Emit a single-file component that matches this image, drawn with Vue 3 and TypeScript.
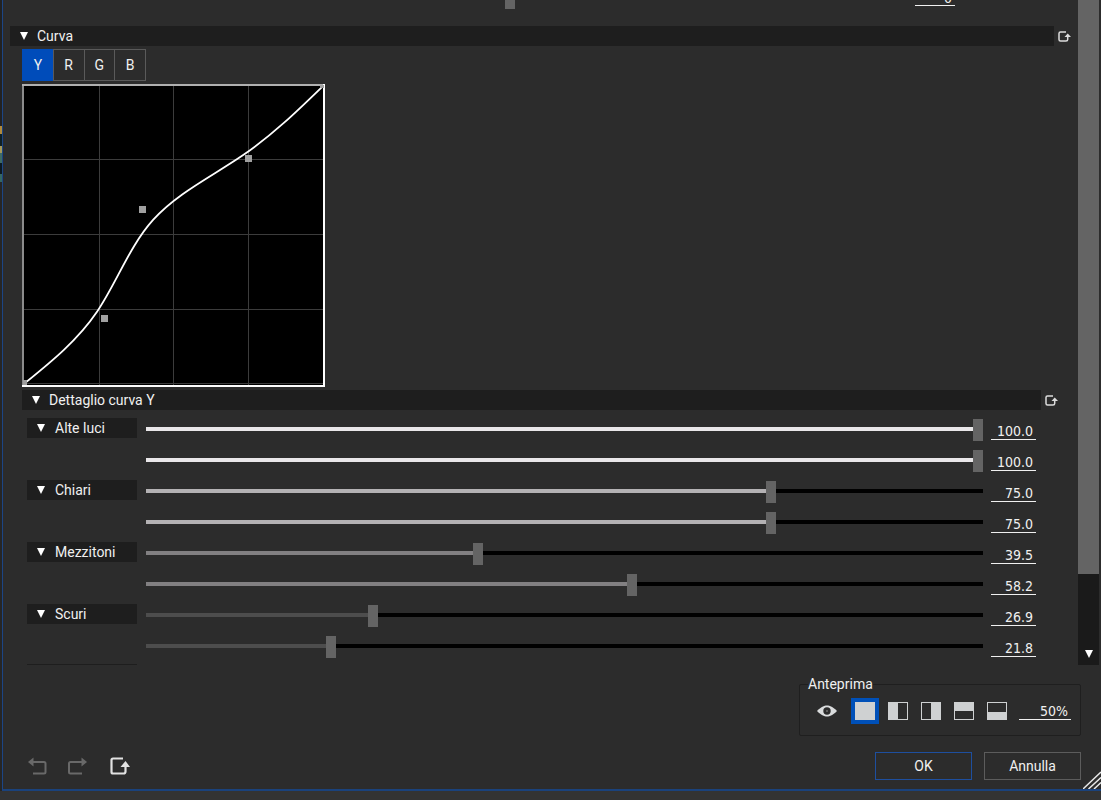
<script setup lang="ts">
import { computed, reactive, ref } from 'vue'

interface Point { x: number; y: number }
interface Band { name: string; color: string; values: number[] }
interface Split { id: string; label: string; x: number; y: number; w: number; h: number }

const channels = ['Y', 'R', 'G', 'B']
const channel = ref('Y')
const masterValue = ref(0)
const splitMode = ref('full')
const amount = ref('50%')

const bands = reactive<Band[]>([
  { name: 'Alte luci', color: '#e9e7e9', values: [100, 100] },
  { name: 'Chiari', color: '#b4b2b4', values: [75, 75] },
  { name: 'Mezzitoni', color: '#828082', values: [39.5, 58.2] },
  { name: 'Scuri', color: '#4d4d4d', values: [26.9, 21.8] },
])

const splits: Split[] = [
  { id: 'full', label: 'Intero', x: 0, y: 0, w: 20, h: 18 },
  { id: 'left', label: 'Sinistra', x: 0, y: 0, w: 10, h: 18 },
  { id: 'right', label: 'Destra', x: 10, y: 0, w: 10, h: 18 },
  { id: 'top', label: 'Alto', x: 0, y: 0, w: 20, h: 9 },
  { id: 'bottom', label: 'Basso', x: 0, y: 10, w: 20, h: 8 },
]

const gridX = [77, 151, 226]
const gridY = [75, 150, 225, 299]

const points: Point[] = [
  { x: 3, y: 299 },
  { x: 82, y: 235 },
  { x: 120, y: 126 },
  { x: 226, y: 75 },
  { x: 301, y: 2 },
]

const mix = (a: Point, b: Point, t: number): Point => ({
  x: a.x + (b.x - a.x) * t,
  y: a.y + (b.y - a.y) * t,
})
const fmt = (p: Point): string => `${p.x.toFixed(1)} ${p.y.toFixed(1)}`

// Uniform cubic B-spline through the control polygon, pinned at both ends.
const curvePath = computed(() => {
  const last = points.length - 1
  const knot = (i: number): Point =>
    i === 0 || i === last
      ? points[i]
      : mix(mix(points[i - 1], points[i], 2 / 3), mix(points[i], points[i + 1], 1 / 3), 0.5)
  let d = `M${fmt(knot(0))}`
  for (let i = 0; i < last; i++) {
    const a = mix(points[i], points[i + 1], 1 / 3)
    const b = mix(points[i], points[i + 1], 2 / 3)
    d += ` C${fmt(a)} ${fmt(b)} ${fmt(knot(i + 1))}`
  }
  return d
})

function setValue(band: Band, index: number, event: Event): void {
  const next = Number((event.target as HTMLInputElement).value)
  if (!Number.isNaN(next)) band.values[index] = next
}
</script>

<template>
  <div class="screen">
    <div class="backdrop"></div>
    <main class="dialog">
      <div class="body">
        <div class="viewport">
          <div class="content">
            <div class="master">
              <input v-model.number="masterValue" class="slider" type="range" min="-100" max="100" aria-label="Livello" />
              <input v-model="masterValue" class="number" type="text" aria-label="Valore livello" />
            </div>

            <div class="section">
              <button class="header" type="button">
                <svg class="tri" viewBox="0 0 8 8"><path d="M0 0H8L4 8Z" /></svg>Curva
              </button>
              <button class="reset" type="button" aria-label="Reimposta curva">
                <svg viewBox="0 0 13 11">
                  <path d="M8 1H2.500Q1 1 1 2.500V8.500Q1 10 2.500 10H8Q9.700 10 9.700 8.500V5" fill="none" stroke="#dcdcdc" stroke-width="1.500" />
                  <path d="M6.500 6L9.700 2.500L13 6Z" fill="#dcdcdc" />
                </svg>
              </button>
            </div>

            <div class="curve">
              <div class="tabs">
                <button v-for="c in channels" :key="c" type="button" class="tab" :class="{ active: c === channel }" @click="channel = c">{{ c }}</button>
              </div>
              <svg class="plot" viewBox="0 0 303 303">
                <rect width="303" height="303" fill="#000" />
                <g stroke="#3c3c3c" stroke-width="1" shape-rendering="crispEdges">
                  <path v-for="x in gridX" :key="'x' + x" :d="`M${x + 0.5} 0V303`" />
                  <path v-for="y in gridY" :key="'y' + y" :d="`M0 ${y + 0.5}H303`" />
                </g>
                <path d="M1 303V1" stroke="#8c8c8c" stroke-width="2" />
                <path d="M0 1H303" stroke="#b0b0b0" stroke-width="2" />
                <path d="M302 0V302H0" fill="none" stroke="#fff" stroke-width="2" />
                <path :d="curvePath" fill="none" stroke="#fff" stroke-width="1.800" />
                <rect v-for="p in points.slice(1, -1)" :key="p.x" :x="p.x - 3" :y="p.y - 4" width="7" height="7" fill="#a0a0a0" />
                <rect x="1" y="296" width="4" height="5" fill="#a0a0a0" />
                <rect x="298" y="1" width="4" height="3" fill="#a0a0a0" />
              </svg>
            </div>

            <div class="section nested">
              <button class="header" type="button">
                <svg class="tri" viewBox="0 0 8 8"><path d="M0 0H8L4 8Z" /></svg>Dettaglio curva Y
              </button>
              <button class="reset" type="button" aria-label="Reimposta dettaglio">
                <svg viewBox="0 0 13 11">
                  <path d="M8 1H2.500Q1 1 1 2.500V8.500Q1 10 2.500 10H8Q9.700 10 9.700 8.500V5" fill="none" stroke="#dcdcdc" stroke-width="1.500" />
                  <path d="M6.500 6L9.700 2.500L13 6Z" fill="#dcdcdc" />
                </svg>
              </button>
            </div>

            <div class="bands">
              <section v-for="band in bands" :key="band.name" class="band">
                <button class="header" type="button">
                  <svg class="tri" viewBox="0 0 8 8"><path d="M0 0H8L4 8Z" /></svg>{{ band.name }}
                </button>
                <div class="rows">
                  <div v-for="(v, i) in band.values" :key="i" class="row">
                    <input
                      class="slider" type="range" min="0" max="100" step="0.1" :value="v"
                      :aria-label="`${band.name} ${i + 1}`"
                      :style="{ '--fill': v + '%', '--tone': band.color }"
                      @input="setValue(band, i, $event)"
                    />
                    <input
                      class="number" type="text" :value="v.toFixed(1)"
                      :aria-label="`Valore ${band.name} ${i + 1}`"
                      @change="setValue(band, i, $event)"
                    />
                  </div>
                </div>
              </section>
              <div class="rule"></div>
            </div>
          </div>
        </div>
        <div class="scrollbar">
          <div class="thumb"></div>
          <button class="down" type="button" aria-label="Scorri in basso">
            <svg class="tri" viewBox="0 0 8 8"><path d="M0 0H8L4 8Z" /></svg>
          </button>
        </div>
      </div>

      <footer class="footer">
        <fieldset class="preview">
          <legend>Anteprima</legend>
          <button class="eye" type="button" aria-label="Mostra anteprima">
            <svg viewBox="0 0 20 12">
              <path d="M0 6C4 2 7 0.500 10 0.500S16 2 20 6C16 10 13 11.500 10 11.500S4 10 0 6Z" fill="#dadcdd" />
              <circle cx="10" cy="6" r="3.700" fill="#2c2c2c" /><circle cx="10" cy="6" r="1" fill="#6c6c6c" />
            </svg>
          </button>
          <button
            v-for="s in splits" :key="s.id" type="button" class="split"
            :class="{ active: s.id === splitMode }" :aria-label="s.label" @click="splitMode = s.id"
          >
            <svg viewBox="0 0 20 18">
              <rect x="0.500" y="0.500" width="19" height="17" fill="none" stroke="#cfd1d2" />
              <rect :x="s.x" :y="s.y" :width="s.w" :height="s.h" fill="#cfd1d2" />
            </svg>
          </button>
          <input v-model="amount" class="number amount" type="text" aria-label="Percentuale anteprima" />
        </fieldset>

        <div class="actions">
          <div class="history">
            <button type="button" aria-label="Annulla modifica">
              <svg viewBox="0 0 20 18">
                <path d="M5 5H16Q17.500 5 17.500 6.500V15Q17.500 16.500 16 16.500H5" fill="none" stroke="#696969" stroke-width="2" />
                <path d="M0 5L5.500 0.500V9.500Z" fill="#696969" />
              </svg>
            </button>
            <button type="button" aria-label="Ripeti modifica">
              <svg viewBox="0 0 20 18">
                <path d="M14 5H2.500Q1 5 1 6.500V15Q1 16.500 2.500 16.500H14" fill="none" stroke="#696969" stroke-width="2" />
                <path d="M19 5L13.500 0.500V9.500Z" fill="#696969" />
              </svg>
            </button>
            <button type="button" class="reset-all" aria-label="Reimposta tutto">
              <svg viewBox="0 0 20 18">
                <path d="M13 1.500H3Q1.500 1.500 1.500 3V15Q1.500 16.500 3 16.500H13.500Q15.500 16.500 15.500 14.500V8" fill="none" stroke="#e2e2e2" stroke-width="2.200" />
                <path d="M10.500 10L15.500 4L20 10Z" fill="#e2e2e2" />
              </svg>
            </button>
          </div>
          <div class="confirm">
            <button type="button" class="push primary">OK</button>
            <button type="button" class="push">Annulla</button>
          </div>
        </div>
        <svg class="grip" viewBox="0 0 18 18"><path d="M0 18L18 1M5.500 18L18 6.500M11 18L18 11.500" stroke="#e8e8e8" stroke-width="1.500" /></svg>
      </footer>
    </main>
  </div>
</template>

<style>
body {
  margin: 0;
  background: #333;
}
</style>

<style scoped>
.screen {
  box-sizing: border-box;
  display: flex;
  height: 100vh;
  min-height: 600px;
  padding-bottom: 9px;
  overflow: hidden;
  background: #333;
  color: #f0f0f0;
  font: 14px/20px Roboto, "Noto Sans", sans-serif;
}
.backdrop {
  flex: none;
  width: 2px;
  background:
    linear-gradient(#222 126px, #b08a3c 126px, #b08a3c 134px, #0f2024 134px, #0f2024 146px, #a3975a 146px,
      #a3975a 153px, #3f6b63 153px, #3f6b63 163px, #0d1a22 163px, #0d1a22 174px, #356763 174px, #356763 182px, #262626 182px);
}
.dialog {
  display: flex;
  flex: 1;
  flex-direction: column;
  min-width: 0;
  background: #2c2c2c;
  border-left: 1px solid #1c4585;
  border-bottom: 2px solid #1a427c;
}
button {
  box-sizing: border-box;
  margin: 0;
  padding: 0;
  border: 0;
  background: none;
  color: inherit;
  font: inherit;
}
svg {
  display: block;
}
.body {
  display: flex;
  flex: 1;
  min-height: 0;
}
.viewport {
  flex: 1;
  min-width: 0;
  overflow: hidden;
}
.content {
  margin-top: -20px;
}
.master {
  display: flex;
  align-items: flex-end;
  gap: 8px;
  height: 46px;
  padding: 0 123px 17px 110px;
  box-sizing: border-box;
}
.master .number {
  width: 40px;
  margin-bottom: 3px;
}
.section {
  display: flex;
  gap: 4px;
  padding: 0 7px;
}
.section.nested {
  padding: 3px 20px 4px 19px;
}
.header {
  display: flex;
  align-items: center;
  gap: 9px;
  height: 20px;
  padding-left: 10px;
  background: #1e1e1e;
  text-align: left;
  white-space: nowrap;
}
.section .header {
  flex: 1;
}
.tri {
  width: 8px;
  height: 8px;
  fill: #fff;
}
.reset svg {
  width: 13px;
  height: 11px;
}
.curve {
  padding: 3px 0 0 19px;
}
.tabs {
  display: flex;
  width: 124px;
  padding-right: 1px;
  box-sizing: border-box;
  margin-bottom: 3px;
}
.tab {
  flex: 1;
  height: 32px;
  margin-right: -1px;
  border: 1px solid #5a5a5a;
}
.tab.active {
  background: #004cba;
  border-color: #004cba;
}
.plot {
  width: 303px;
  height: 303px;
}
.bands {
  padding: 0 42px 0 24px;
}
.band {
  display: flex;
  gap: 9px;
}
.band > .header {
  flex: none;
  gap: 10px;
  width: 110px;
  margin-top: 4px;
}
.rule {
  width: 110px;
  height: 1px;
  margin-top: 2px;
  background: #1e1e1e;
}
.rows {
  flex: 1;
}
.row {
  display: flex;
  align-items: center;
  gap: 8px;
  height: 31px;
}
.slider {
  flex: 1;
  min-width: 0;
  height: 22px;
  margin: 0;
  appearance: none;
  background: linear-gradient(90deg, var(--tone, #4d4d4d) var(--fill, 50%), #000 var(--fill, 50%)) 0 8px / 100% 4px no-repeat;
}
.slider::-webkit-slider-thumb {
  appearance: none;
  width: 10px;
  height: 22px;
  border: 0;
  background: #646464;
}
.number {
  box-sizing: border-box;
  width: 45px;
  height: 20px;
  padding: 4px 3px 0 0;
  border: 0;
  border-bottom: 1px solid #f0f0f0;
  border-radius: 0;
  background: none;
  color: #f0f0f0;
  font: 14px/15px "DejaVu Sans Condensed", "Noto Sans", sans-serif;
  text-align: right;
}
.scrollbar {
  display: flex;
  flex: none;
  flex-direction: column;
  width: 21px;
  margin: 0 2px 1px 0;
  background: #1a1a1a;
}
.thumb {
  flex: 1;
  background: #646464;
}
.down {
  display: flex;
  align-items: flex-end;
  justify-content: center;
  height: 91px;
  padding-bottom: 7px;
}
.footer {
  position: relative;
  display: flex;
  flex-direction: column;
  align-items: flex-end;
  gap: 16px;
  padding: 9px 20px 9px 25px;
}
.preview {
  display: flex;
  align-items: center;
  box-sizing: border-box;
  min-width: 0;
  margin: 0;
  padding: 5px 9px 11px 17px;
  border: 1px solid #1f1f1f;
  border-radius: 2px;
}
.preview legend {
  margin-left: -9px;
  padding: 0;
  line-height: 18px;
}
.eye {
  margin-right: 14px;
}
.eye svg {
  width: 20px;
  height: 12px;
}
.split {
  display: flex;
  align-items: center;
  justify-content: center;
  width: 28px;
  height: 26px;
  margin-right: 5px;
}
.split.active {
  background: #0050b8;
}
.split svg {
  width: 20px;
  height: 18px;
}
.amount {
  width: 52px;
  margin: 0 0 2px 3px;
  padding-top: 2px;
}
.actions {
  display: flex;
  align-self: stretch;
  align-items: center;
  justify-content: space-between;
}
.history {
  display: flex;
  gap: 20px;
}
.history svg {
  width: 20px;
  height: 18px;
}
.history .reset-all {
  margin-left: 2px;
}
.confirm {
  display: flex;
  gap: 12px;
}
.push {
  width: 97px;
  height: 28px;
  border: 1px solid #5c5c5c;
}
.push.primary {
  border-color: #1e4f9f;
}
.grip {
  position: absolute;
  right: 0;
  bottom: 0;
  width: 18px;
  height: 18px;
}
</style>
